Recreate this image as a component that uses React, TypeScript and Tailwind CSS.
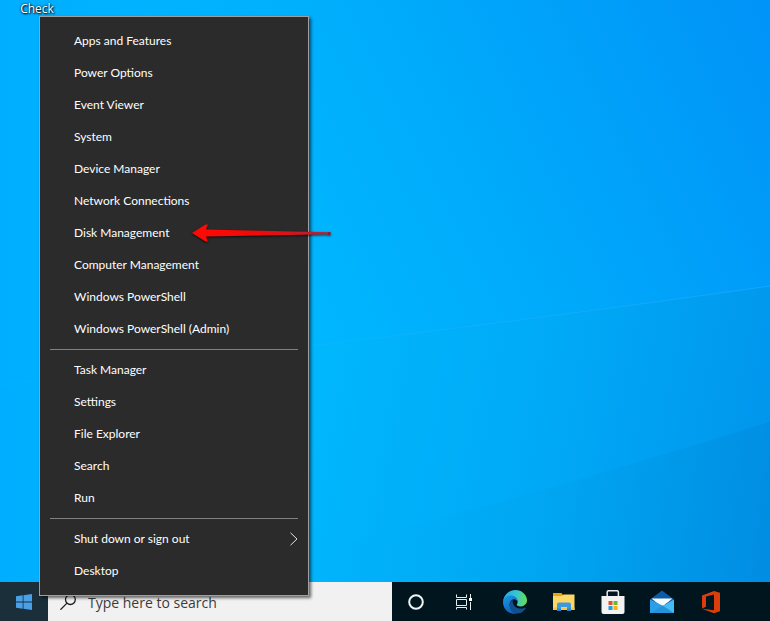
import React from 'react';

interface MenuEntry {
    label: string;
    arrow?: boolean;
    submenu?: boolean;
}

const groups: MenuEntry[][] = [
    [
        { label: 'Apps and Features' },
        { label: 'Power Options' },
        { label: 'Event Viewer' },
        { label: 'System' },
        { label: 'Device Manager' },
        { label: 'Network Connections' },
        { label: 'Disk Management', arrow: true },
        { label: 'Computer Management' },
        { label: 'Windows PowerShell' },
        { label: 'Windows PowerShell (Admin)' },
    ],
    [
        { label: 'Task Manager' },
        { label: 'Settings' },
        { label: 'File Explorer' },
        { label: 'Search' },
        { label: 'Run' },
    ],
    [{ label: 'Shut down or sign out', submenu: true }, { label: 'Desktop' }],
];

// --- WALLPAPER ---
function Wallpaper() {
    return (
        <svg
            className="absolute inset-0 w-full h-full"
            viewBox="0 0 770 582"
            preserveAspectRatio="none"
            aria-hidden="true"
        >
            <defs>
                <linearGradient id="sky" gradientUnits="userSpaceOnUse" x1="290" y1="330" x2="790" y2="80">
                    <stop offset="0" stopColor="#00b8ff" />
                    <stop offset="0.45" stopColor="#00aafb" />
                    <stop offset="1" stopColor="#0094f8" />
                </linearGradient>
                <linearGradient id="left" x1="0" y1="0" x2="1" y2="0">
                    <stop offset="0" stopColor="#00aeff" />
                    <stop offset="1" stopColor="#00b0ff" stopOpacity="0" />
                </linearGradient>
                <linearGradient id="ground" gradientUnits="userSpaceOnUse" x1="310" y1="380" x2="790" y2="470">
                    <stop offset="0" stopColor="#00b7fd" />
                    <stop offset="0.5" stopColor="#00a9f6" />
                    <stop offset="1" stopColor="#0094ec" />
                </linearGradient>
                <linearGradient id="corner" gradientUnits="userSpaceOnUse" x1="310" y1="500" x2="780" y2="560">
                    <stop offset="0" stopColor="#00b2f8" stopOpacity="0" />
                    <stop offset="0.5" stopColor="#00a5f0" stopOpacity="0.7" />
                    <stop offset="1" stopColor="#008ce2" />
                </linearGradient>
                <linearGradient id="beam" x1="0" y1="0" x2="1" y2="0">
                    <stop offset="0" stopColor="#20bcff" stopOpacity="0.1" />
                    <stop offset="1" stopColor="#20a8ff" stopOpacity="0.7" />
                </linearGradient>
            </defs>
            <rect width="770" height="582" fill="url(#sky)" />
            <path d="M0 385 Q200 362 310 346 Q560 316 770 286 V582 H0Z" fill="url(#ground)" />
            <path d="M310 552 Q520 500 770 422 V582 H310Z" fill="url(#corner)" />
            <rect width="310" height="582" fill="url(#left)" />
            <path d="M0 385 Q200 362 310 346 Q560 316 770 286" fill="none" stroke="url(#beam)" strokeWidth="1" />
        </svg>
    );
}

// --- ICONS ---
function WindowsLogo() {
    return (
        <svg className="w-4 h-4" viewBox="0 0 16 16" fill="#4aa0e6" aria-hidden="true">
            <path d="M0 2.3 6.7 1.3V7.6H0ZM7.5 1.2 16 0V7.6H7.5ZM0 8.4H6.7V14.7L0 13.8ZM7.5 8.4H16V16L7.5 14.8Z" />
        </svg>
    );
}

function SearchGlyph() {
    return (
        <svg className="w-4 h-4" viewBox="0 0 16 16" fill="none" stroke="#1c1c1c" strokeWidth="1.3" aria-hidden="true">
            <circle cx="10.4" cy="5.6" r="4.9" />
            <path d="M7 9.1 0.4 15.7" />
        </svg>
    );
}

function CortanaIcon() {
    return (
        <svg className="w-4 h-4" viewBox="0 0 16 16" fill="none" aria-hidden="true">
            <circle cx="8" cy="8" r="6.8" stroke="#f1f4f5" strokeWidth="2" />
        </svg>
    );
}

function TaskViewIcon() {
    return (
        <svg className="w-4 h-4" viewBox="0 0 16 16" fill="none" stroke="#e8ecee" aria-hidden="true">
            <path d="M0.5 0.5V3.5H10.5V0.5M0.5 5.5H10.5V11.5H0.5ZM0.5 15.5V13.5H10.5V15.5M14.5 0V4M14.5 8V16" />
            <path d="M13 4h3v3h-3z" fill="#fff" stroke="none" />
        </svg>
    );
}

function EdgeIcon() {
    return (
        <svg className="w-6 h-6" viewBox="0 0 24 24" aria-hidden="true">
            <defs>
                <linearGradient id="edgeTop" x1="0" y1="0.4" x2="1" y2="0.5">
                    <stop offset="0" stopColor="#27a5e4" />
                    <stop offset="0.5" stopColor="#35c4d6" />
                    <stop offset="1" stopColor="#66dc57" />
                </linearGradient>
                <linearGradient id="edgeLeft" x1="0" y1="0" x2="0.5" y2="1">
                    <stop offset="0" stopColor="#1d9be6" />
                    <stop offset="1" stopColor="#0c60b8" />
                </linearGradient>
            </defs>
            <path d="M0.1 11C0.9 4.7 6 0 12.1 0 19 0 24 5 24 10.3c0 3.5-2.7 6.1-6.2 6.1-3 0-4.1-.9-4.1-1.6 0-.6.9-1.1.9-2.9C14.6 8.7 11.7 6.1 8 6.1 4 6.1 1.3 8.4.1 11Z" fill="url(#edgeTop)" />
            <path d="M0 12C.2 8.3 3.7 5.6 7.8 5.6c3.9 0 6.8 2.7 6.8 6.1-.6-1.5-1.8-2.4-3.4-2.4-2.5 0-4.5 2.2-4.5 5.4 0 4.4 3.2 8 7.6 8.9C6.6 25.2 0 19.6 0 12Z" fill="url(#edgeLeft)" />
            <path d="M9.6 9.8c-3 1.7-3.7 5.4-2.2 8.6 1.6 3.6 5.6 5.6 8.6 4.9 3-.7 5.4-2.7 6.7-4.9.3-.6-.2-.9-.7-.7-5 2.3-12.8.5-12.4-7.9Z" fill="#124f91" />
        </svg>
    );
}

function FolderIcon() {
    return (
        <svg className="w-6 h-6" viewBox="0 0 24 24" aria-hidden="true">
            <path d="M1 3h8.5l1.5 2V8H1Z" fill="#e8a50c" />
            <path d="M1 6h9l1.5-1.5H22.500V20H1Z" fill="#ffd766" />
            <path d="M1 17.5H22.500V20H1Z" fill="#f5c64d" />
            <path d="M5 21v-6.5q0-2 2-2H17q2 0 2 2V21h-4v-4H9v4Z" fill="#3d9ae0" />
            <path d="M5 18.5h4V21H5ZM15 18.5h4V21h-4Z" fill="#2f83c8" />
        </svg>
    );
}

function StoreIcon() {
    return (
        <svg className="w-6 h-6" viewBox="0 0 24 24" aria-hidden="true">
            <path d="M6.2 8V2.2q0-1.5 1.5-1.5h8.2q1.5 0 1.5 1.5V8" fill="none" stroke="#e9eaeb" strokeWidth="1.5" />
            <path d="M0.5 6H23.5V22q0 2-2 2h-19q-2 0-2-2Z" fill="#f2f2f2" />
            <path d="M7.5 11h4v4h-4Z" fill="#e0502c" />
            <path d="M12.5 11h4v4h-4Z" fill="#78b42a" />
            <path d="M7.5 16h4v4h-4Z" fill="#1d9fe0" />
            <path d="M12.5 16h4v4h-4Z" fill="#f7b50d" />
        </svg>
    );
}

function MailIcon() {
    return (
        <svg className="w-6 h-6" viewBox="0 0 24 24" aria-hidden="true">
            <path d="M0 9.5 12 0.5 24 9.5V13H0Z" fill="#0c5ba9" />
            <path d="M1.5 8.5H22.5L12 17Z" fill="#f8fbfd" />
            <path d="M0 9.5 12.5 15.5 24 23H0Z" fill="#2a9fe6" />
            <path d="M24 9.5V23H0Z" fill="#45bdf2" />
            <path d="M0 23 12.5 15.5 24 23Z" fill="#2493dc" />
        </svg>
    );
}

function OfficeIcon() {
    return (
        <svg className="w-6 h-6" viewBox="0 0 24 24" aria-hidden="true">
            <path d="M3 5.5 15 1 21 2.8V21.2L15 23.2 3 18.8 15 20.2V4.6L7 6.5V16.8L3 18.6Z" fill="#dc3e0b" />
        </svg>
    );
}

const pinned = [
    { name: 'Microsoft Edge', icon: <EdgeIcon /> },
    { name: 'File Explorer', icon: <FolderIcon /> },
    { name: 'Microsoft Store', icon: <StoreIcon /> },
    { name: 'Mail', icon: <MailIcon /> },
    { name: 'Office', icon: <OfficeIcon /> },
];

function RedArrow() {
    return (
        <svg
            className="absolute left-[152px] top-1/2 -translate-y-1/2 w-[140px] h-5 z-10 pointer-events-none drop-shadow-[0_1px_1px_rgba(0,0,0,0.7)]"
            viewBox="0 0 140 20"
            aria-hidden="true"
        >
            <defs>
                <linearGradient id="arrow" x1="0" y1="0" x2="1" y2="0">
                    <stop offset="0" stopColor="#ff0a05" />
                    <stop offset="0.5" stopColor="#f00a08" />
                    <stop offset="1" stopColor="#b02335" />
                </linearGradient>
            </defs>
            <path d="M0 10 13.5 1.500H16L14 6.5 137 9.300V11.200L14 13.5 16 18.500H13.500Z" fill="url(#arrow)" />
            <path d="M136 9h2.5v3H136Z" fill="#8c1c30" />
        </svg>
    );
}

export default function App() {
    return (
        <div className="relative h-screen flex flex-col overflow-hidden font-['Open_Sans','Noto_Sans',sans-serif] text-white">
            {/* DESKTOP */}
            <main className="relative flex-1">
                <Wallpaper />
                <div className="relative w-[74px] text-center text-xs leading-[18px] [text-shadow:1px_1px_2px_#000,0_0_2px_#000]">
                    Check
                </div>
            </main>

            {/* TASKBAR */}
            <footer className="flex h-[39px] bg-[#01151f]">
                <button aria-label="Start" className="w-12 flex items-center justify-center bg-[#1a2f39]">
                    <WindowsLogo />
                </button>
                <label className="flex items-center gap-3 w-[344px] pl-3 bg-[#f1f1f1]">
                    <SearchGlyph />
                    <input
                        type="text"
                        aria-label="Search"
                        placeholder="Type here to search"
                        className="flex-1 min-w-0 pt-0.5 bg-transparent text-sm text-[#333] placeholder:text-[#3c3c3c] outline-none"
                    />
                </label>
                <button aria-label="Cortana" className="w-12 flex items-center justify-center">
                    <CortanaIcon />
                </button>
                <button aria-label="Task View" className="w-12 flex items-center justify-center">
                    <TaskViewIcon />
                </button>
                <nav className="flex ml-0.5">
                    {pinned.map((app) => (
                        <button key={app.name} aria-label={app.name} className="w-[49px] flex items-center justify-center">
                            {app.icon}
                        </button>
                    ))}
                </nav>
            </footer>

            {/* START CONTEXT MENU */}
            <div
                role="menu"
                className="absolute left-[39px] bottom-[25px] w-[270px] py-2 bg-[#2b2b2b] border border-[#a0a0a0] shadow-[2px_2px_3px_rgba(0,0,0,0.6)] font-['Lato','Open_Sans',sans-serif]"
            >
                {groups.map((group, i) => (
                    <div key={group[0].label} role="group">
                        {i > 0 && <hr className="mx-2.5 my-1 border-[#808080]" />}
                        {group.map((entry) => (
                            <button
                                key={entry.label}
                                role="menuitem"
                                className="relative flex w-full h-8 items-center justify-between pl-[34px] pr-2.5 text-xs text-left"
                            >
                                {entry.label}
                                {entry.arrow && <RedArrow />}
                                {entry.submenu && (
                                    <svg className="w-2 h-3.5" viewBox="0 0 8 14" fill="none" stroke="#e0e0e0" aria-hidden="true">
                                        <path d="M0.5 0.8 7 7 0.5 13.2" />
                                    </svg>
                                )}
                            </button>
                        ))}
                    </div>
                ))}
            </div>
        </div>
    );
}
